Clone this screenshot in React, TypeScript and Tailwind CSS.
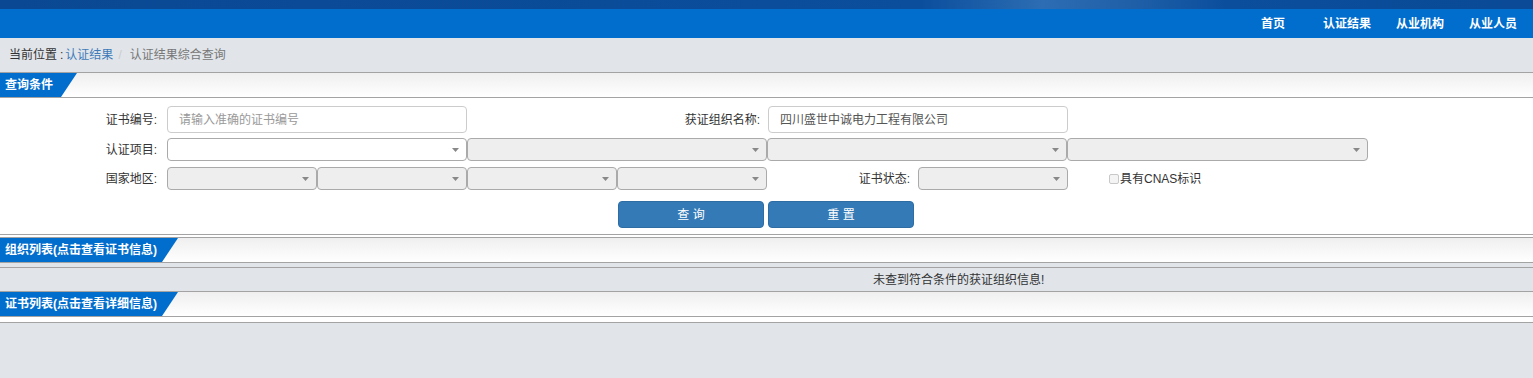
const font = "font-['Liberation_Sans','Noto_Sans_CJK_SC',sans-serif]"

const navItems = [
  { label: '首页', cls: '' },
  { label: '认证结果', cls: 'ml-[38px]' },
  { label: '从业机构', cls: 'ml-[25px]' },
  { label: '从业人员', cls: 'ml-[25px]' },
]

function SectionHeader({ title, width }: { title: string; width: string }) {
  return (
    <div className="h-[26px] border-y border-[#a3a3a3] bg-linear-to-b from-[#efefef] to-white">
      <div
        className={`${width} h-full bg-[#016dcc] pl-[5px] flex items-center text-white font-bold text-[12px] [clip-path:polygon(0_0,100%_0,calc(100%_-_16px)_100%,0_100%)]`}
      >
        {title}
      </div>
    </div>
  )
}

function Select({ width, disabled = true }: { width: string; disabled?: boolean }) {
  return (
    <div
      className={`${width} h-full rounded-[4px] border border-[#aaa] flex items-center justify-end pr-[7px] ${
        disabled ? 'bg-[#eee]' : 'bg-white'
      }`}
    >
      <svg width="7" height="4" viewBox="0 0 7 4">
        <path d="M0 0h7L3.5 4z" fill="#888" />
      </svg>
    </div>
  )
}

export default function App() {
  return (
    <div className={`min-h-screen bg-[#e1e5ea] text-[12px] text-[#333] ${font}`}>
      {/* banner strip */}
      <div className="h-[9px] bg-[linear-gradient(90deg,#0a4893_0%,#0b4e9c_60%,#2c6db3_68%,#1f5fa8_74%,#0b4e9c_80%,#0a4a96_100%)]" />

      {/* nav */}
      <div className="h-[29px] bg-[#016dcc] flex items-center justify-end pr-[16px]">
        {navItems.map((n) => (
          <span key={n.label} className={`${n.cls} text-white font-bold text-[12px]`}>
            {n.label}
          </span>
        ))}
      </div>

      {/* breadcrumb */}
      <div className="h-[34px] flex items-center pl-[9px]">
        <span className="text-[#333]">当前位置</span>
        <span className="ml-[3px] mr-[2px] text-[#333]">:</span>
        <span className="text-[#3f7bb8]">认证结果</span>
        <span className="ml-[5px] mr-[8px] text-[#ccc]">/</span>
        <span className="text-[#777]">认证结果综合查询</span>
      </div>

      <SectionHeader title="查询条件" width="w-[77px]" />

      {/* query form */}
      <div className="bg-white border-b border-[#a3a3a3] pt-[8px] pb-[6px]">
        <div className="flex items-center h-[27px]">
          <span className="w-[157px] text-right">证书编号:</span>
          <div className="ml-[10px] w-[300px] h-full rounded-[4px] border border-[#ccc] flex items-center pl-[11px] text-[#999]">
            请输入准确的证书编号
          </div>
          <span className="w-[293px] text-right">获证组织名称:</span>
          <div className="ml-[8px] w-[300px] h-full rounded-[4px] border border-[#ccc] flex items-center pl-[11px] text-[#555]">
            四川盛世中诚电力工程有限公司
          </div>
        </div>

        <div className="flex items-center h-[23px] mt-[5px]">
          <span className="w-[157px] text-right">认证项目:</span>
          <div className="ml-[10px] flex h-full">
            <Select width="w-[300px]" disabled={false} />
            <Select width="w-[300px]" />
            <Select width="w-[300px]" />
            <Select width="w-[301px]" />
          </div>
        </div>

        <div className="flex items-center h-[23px] mt-[6px]">
          <span className="w-[157px] text-right">国家地区:</span>
          <div className="ml-[10px] flex h-full">
            <Select width="w-[150px]" />
            <Select width="w-[150px]" />
            <Select width="w-[150px]" />
            <Select width="w-[150px]" />
          </div>
          <span className="w-[143px] text-right">证书状态:</span>
          <div className="ml-[8px] flex h-full">
            <Select width="w-[150px]" />
          </div>
          <span className="ml-[41px] w-[10px] h-[10px] border border-[#c8c8c8] bg-[#f4f4f4] rounded-[2px]" />
          <span className="ml-[1px]">具有CNAS标识</span>
        </div>

        <div className="flex h-[27px] mt-[11px] pl-[618px] gap-[4px]">
          <button className="w-[146px] h-full rounded-[4px] bg-[#337ab7] border border-[#2e6da4] text-white text-[12px]">
            查 询
          </button>
          <button className="w-[146px] h-full rounded-[4px] bg-[#337ab7] border border-[#2e6da4] text-white text-[12px]">
            重 置
          </button>
        </div>
      </div>

      <div className="h-[2px] bg-white" />
      <SectionHeader title="组织列表(点击查看证书信息)" width="w-[178px]" />

      <div className="h-[4px]" />
      <div className="h-[24px] border-t border-[#a3a3a3] flex items-center pl-[873px] text-[#333]">
        未查到符合条件的获证组织信息!
      </div>

      <SectionHeader title="证书列表(点击查看详细信息)" width="w-[178px]" />
      <div className="h-[6px] bg-white border-b border-[#a3a3a3]" />
    </div>
  )
}
